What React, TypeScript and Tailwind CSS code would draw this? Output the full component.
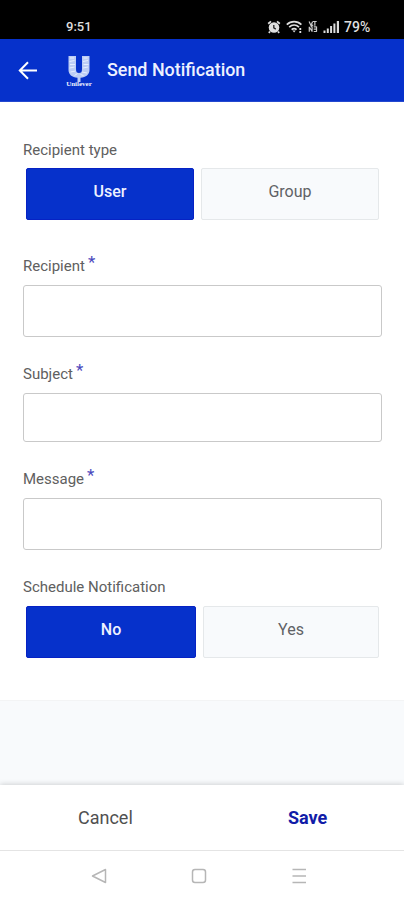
import React from 'react';

const AlarmIcon = () => (
  <svg className="h-[14px] w-[14px]" viewBox="0 0 14 14" fill="none">
    <circle cx="7" cy="7.5" r="5.3" fill="#dedede" />
    <path d="M1.2 3.8 4 1.4M12.8 3.8 10 1.4M3 11.5l-1.2 1.3M11 11.5l1.2 1.3" stroke="#dedede" strokeWidth="1.8" />
    <path d="M6.8 5v2.9l2 1.2" stroke="#222" strokeWidth="1.3" />
  </svg>
);

const WifiIcon = () => (
  <svg className="h-[14px] w-[17px]" viewBox="0 0 17 14" fill="none" stroke="#dedede" strokeWidth="1.7">
    <path d="M.8 4.6C5 .6 11.2.6 15.4 4.6M3.2 7.2c2.9-2.7 6.9-2.7 9.8 0M5.6 9.7c1.5-1.4 3.5-1.4 5 0" />
    <path d="m6.5 10.6 1.6 1.9 1.6-1.9z" fill="#dedede" stroke="none" />
    <path d="M14.3 8v2M14.3 11v2" strokeWidth="1.8" />
  </svg>
);

const VolteIcon = () => (
  <svg className="h-[13px] w-[10px]" viewBox="0 0 10 14" fill="none" stroke="#c9c9c9" strokeWidth="1.3">
    <path d="M.8 1.5 2.8 5.8 4.6 1.5M5 1.6h4M7 1.6v4.6M1 7.2v5.4M1 7.5l3 4.8M4 7v5.6M5.8 7.3h3M5.8 9.8h3M5.8 12.4h3.4M8.8 7v5.4M5.2 5.2l-2.6 2" />
  </svg>
);

const SignalIcon = () => (
  <svg className="h-[12px] w-[17px]" viewBox="0 0 17 12" fill="#dcdcdc">
    <path d="M.5 9.5h2V12h-2zM3.8 7.5h2V12h-2zM7.1 5h2v7h-2zM10.4 2.5h2V12h-2zM13.8 0h2.2v12h-2.2z" />
  </svg>
);

const Logo = () => (
  <div className="flex w-[26px] flex-col items-center">
    <svg className="h-[26px] w-[22px]" viewBox="0 0 22 26" fill="none">
      <path d="M.5 0h7.5v13c0 3 1 4 3 4s3-1 3-4V0h7.5v14c0 4.5-3.5 7.3-9 7.8V26H9.500v-4.200C4 21.300.5 18.500.5 14z" fill="#bccdf5" />
      <path
        d="M2 2h4M1.500 5.500l5-1M2 8.500h5M1.500 12l5-1M2.500 16l5-1M6.500 19.500l3-2M15.500 2h4M15 5.500l5-1M15.500 8.500h5M15 12l5-1M14 16l5 1M12.500 18.500l3 1"
        stroke="#e6eeff"
        strokeWidth="1"
      />
    </svg>
    <span className="-mt-[2px] whitespace-nowrap font-['Liberation_Serif',serif] text-[7px] font-bold leading-[9px] text-[#eef2ff]">
      Unilever
    </span>
  </div>
);

type LabelProps = { text: string; required?: boolean };

const Label = ({ text, required }: LabelProps) => (
  <div className="flex h-5 items-center text-[15px] text-[#606060]">
    <span>{text}</span>
    {required && <span className="relative -top-[4px] ml-[3px] text-[17px] leading-none text-[#4a49bd]">*</span>}
  </div>
);

type ToggleProps = { options: [string, string]; widths: [string, string] };

const Toggle = ({ options, widths }: ToggleProps) => (
  <div className="ml-[3px] flex h-[52px] gap-[7px] text-base">
    <button className={`rounded-[2px] border border-[#0622c4] bg-[#0631cb] pb-[5px] font-medium text-[#eef1ff] ${widths[0]}`}>
      {options[0]}
    </button>
    <button className={`rounded-[2px] border border-[#e5e8ea] bg-[#f8fafc] pb-[5px] text-[#606266] ${widths[1]}`}>
      {options[1]}
    </button>
  </div>
);

const fields = [
  { name: 'Recipient', label: 'mt-[36px]', input: 'mt-[9px] h-[52px]' },
  { name: 'Subject', label: 'mt-[27px]', input: 'mt-[9px] h-[49px]' },
  { name: 'Message', label: 'mt-[27px]', input: 'mt-[9px] h-[52px]' },
];

const App = () => {
  return (
    <div className="flex h-[900px] w-[404px] flex-col overflow-hidden bg-white font-[Roboto,sans-serif]">
      <div className="flex h-[39px] shrink-0 items-center bg-black pt-[14px] text-[13px] text-[#dedede]">
        <span className="ml-[66px] w-[201px] font-medium">9:51</span>
        <AlarmIcon />
        <span className="ml-[5px]"><WifiIcon /></span>
        <span className="ml-[5px]"><VolteIcon /></span>
        <span className="ml-[5px]"><SignalIcon /></span>
        <span className="ml-[4px] mt-px text-[14px] font-medium">79%</span>
      </div>

      <header className="flex h-[63px] shrink-0 items-center border-b border-[#2448cf] bg-[#0631cb]">
        <svg className="ml-[18px] h-5 w-5" viewBox="0 0 20 20" fill="none" stroke="#fff" strokeWidth="2">
          <path d="M19 10.5H2.5M10 2.3 1.8 10.5l8.2 8.2" />
        </svg>
        <span className="ml-[28px] mt-[4px]"><Logo /></span>
        <h1 className="ml-[15px] mt-px text-[17.9px] font-medium text-[#eef1ff]">Send Notification</h1>
      </header>

      <main className="h-[598px] shrink-0 px-[23px] pt-[38px]">
        <Label text="Recipient type" />
        <div className="mt-[8px]">
          <Toggle options={['User', 'Group']} widths={['w-[168px]', 'w-[178px]']} />
        </div>
        {fields.map((f) => (
          <div key={f.name}>
            <div className={f.label}>
              <Label text={f.name} required />
            </div>
            <input aria-label={f.name} className={`block w-[359px] rounded-[3px] border border-[#c9c9c9] bg-white ${f.input}`} />
          </div>
        ))}
        <div className="mt-[27px]">
          <Label text="Schedule Notification" />
        </div>
        <div className="mt-[9px]">
          <Toggle options={['No', 'Yes']} widths={['w-[170px]', 'w-[176px]']} />
        </div>
      </main>

      <div className="h-[85px] shrink-0 border-t border-[#f3f4f5] bg-[#f8fafc]" />

      <footer className="flex h-[65px] shrink-0 items-center bg-white text-lg shadow-[0_-1px_5px_rgba(0,0,0,0.16)]">
        <button className="ml-[78px] w-[210px] text-left text-[#505050]">Cancel</button>
        <button className="font-bold text-[#111ca8]">Save</button>
      </footer>

      <nav className="flex h-[50px] shrink-0 items-center border-t border-[#e4e4e4] bg-white">
        <svg className="h-full w-full" viewBox="0 0 404 49" fill="none" stroke="#b6b6b6" strokeWidth="1.5" strokeLinejoin="round">
          <path d="M92.5 25 105.5 18.5v13z" />
          <rect x="192.5" y="18.5" width="13" height="13" rx="2.5" />
          <path d="M292.5 18.5H306M292.5 25H306M292.5 31.5H306" />
        </svg>
      </nav>
    </div>
  );
};

export default App;
